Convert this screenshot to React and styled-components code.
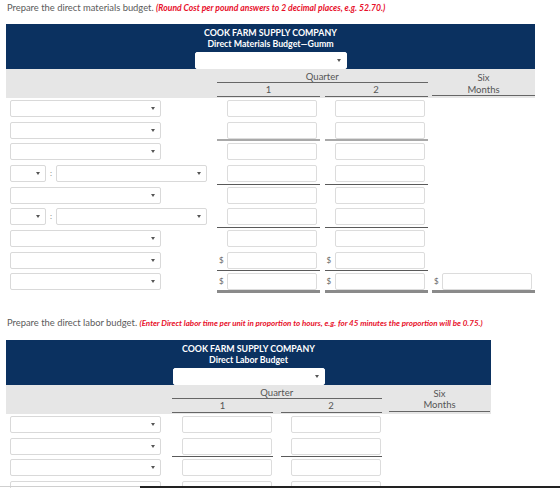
import React from 'react';
import styled, { createGlobalStyle, css } from 'styled-components';

const GlobalStyle = createGlobalStyle`
  html, body {
    margin: 0;
    padding: 0;
    background: #fff;
  }
  body {
    font-family: Lato, "Open Sans", sans-serif;
    color: #555;
    overflow: hidden;
  }
`;

const Page = styled.div`
  padding: 0 0 0 6px;
`;

const Prompt = styled.p`
  margin: ${p => p.$top}px 0 0 1px;
  font-size: 9.4px;
  line-height: 10px;
  color: #5b5b5b;
  white-space: nowrap;
`;

const Hint = styled.em`
  font-size: ${p => p.$size || 8}px;
  color: #e8102b;
  font-weight: 700;
`;

const Sheet = styled.div`
  width: ${p => p.$width}px;
  margin-top: ${p => p.$top}px;
`;

const Banner = styled.div`
  height: 45px;
  box-sizing: border-box;
  padding-top: 3px;
  background: #0b3160;
  display: flex;
  flex-direction: column;
  align-items: center;
  color: #fff;
  font-weight: 700;
  font-size: 8.8px;
  line-height: 11px;
`;

const Picker = styled.div`
  position: relative;
  box-sizing: border-box;
  width: ${p => p.$w}px;
  height: 17px;
  background: #fff;
  border: 1px solid ${p => (p.$bare ? '#fff' : '#d9d9d9')};
  border-radius: 2px;
  flex: none;

  &::after {
    content: '';
    position: absolute;
    right: 5px;
    top: 6px;
    border-left: 2px solid transparent;
    border-right: 2px solid transparent;
    border-top: 3px solid #555;
  }
`;

const BannerPicker = styled(Picker)`
  margin-top: 3px;
`;

const Grid = styled.div`
  display: grid;
  grid-template-columns: ${p => p.$cols};
  column-gap: ${p => p.$gap}px;
`;

const HeadBand = styled(Grid)`
  background: #e6e6e6;
  height: 29px;
  grid-template-rows: 14px 15px;
  font-size: 9.5px;
  text-align: center;
  color: #555;
`;

const HeadCell = styled.div`
  box-sizing: border-box;
  border-bottom: 1px solid #666;
  ${p =>
    p.$top
      ? css`
          grid-column: 2 / span 2;
          grid-row: 1;
          padding-top: 2px;
          line-height: 11px;
        `
      : css`
          grid-column: ${p.$col};
          grid-row: 2;
          height: 14px;
          line-height: 13px;
        `}
`;

const SpanCell = styled.div`
  grid-column: 4;
  grid-row: 1 / span 2;
  box-sizing: border-box;
  height: 27px;
  padding-top: 3px;
  line-height: 11.5px;
  border-bottom: 1px solid #666;
`;

const Row = styled(Grid)`
  height: 21.67px;
`;

const rules = {
  thin: '1px solid #5a5a5a',
  thick: '2px solid #a9a9a9',
  total: '3px solid #8a8a8a',
};

const LabelCell = styled.div`
  display: flex;
  align-items: flex-start;
  padding: 2px 0 0 4px;
`;

const Colon = styled.span`
  width: 10px;
  padding-left: 4px;
  box-sizing: border-box;
  font-size: 8px;
  line-height: 17px;
  color: #888;
`;

const AmountCell = styled.div`
  box-sizing: border-box;
  display: flex;
  align-items: flex-start;
  padding-top: 2px;
  border-bottom: ${p => (p.$rule ? rules[p.$rule] : 'none')};
`;

const Sign = styled.span`
  width: 10px;
  flex: none;
  box-sizing: border-box;
  padding-left: 2px;
  font-size: 8px;
  line-height: 17px;
  color: #666;
`;

const Field = styled.input`
  box-sizing: border-box;
  width: 90px;
  height: 17px;
  margin: 0;
  padding: 0 3px;
  border: 1px solid #dcdcdc;
  border-radius: 2px;
  background: #fff;
  font: inherit;
  outline: none;
`;

const BottomStrip = styled.div`
  position: fixed;
  left: 0;
  right: 0;
  bottom: 0;
  height: 3px;
  display: flex;
  align-items: flex-end;
`;

const StripLight = styled.div`
  width: 140px;
  height: 2px;
  border-top: 1px solid #cfcfcf;
  box-sizing: border-box;
`;

const StripDark = styled.div`
  flex: 1;
  height: 2px;
  background: #222;
`;

const materialRows = [
  { amounts: 2 },
  { amounts: 2, rule: 'thick' },
  { amounts: 2 },
  { amounts: 2, pair: true, rule: 'thin' },
  { amounts: 2 },
  { amounts: 2, pair: true, rule: 'thin' },
  { amounts: 2 },
  { amounts: 2, dollar: true, rule: 'thin' },
  { amounts: 3, dollar: true, rule: 'total' },
];

const laborRows = [
  { amounts: 2 },
  { amounts: 2, rule: 'thin' },
  { amounts: 2 },
  { amounts: 2 },
];

const BudgetTable = ({ width, top, cols, gap, title, rows }) => (
  <Sheet $width={width} $top={top}>
    <Banner>
      <span>COOK FARM SUPPLY COMPANY</span>
      <span>{title}</span>
      <BannerPicker $w={152} $bare />
    </Banner>
    <HeadBand $cols={cols} $gap={gap}>
      <HeadCell $top>Quarter</HeadCell>
      <HeadCell $col={2}>1</HeadCell>
      <HeadCell $col={3}>2</HeadCell>
      <SpanCell>
        Six
        <br />
        Months
      </SpanCell>
    </HeadBand>
    {rows.map((row, i) => (
      <Row key={i} $cols={cols} $gap={gap}>
        <LabelCell>
          {row.pair ? (
            <>
              <Picker $w={36} />
              <Colon>:</Colon>
              <Picker $w={151} />
            </>
          ) : (
            <Picker $w={151} />
          )}
        </LabelCell>
        {Array.from({ length: row.amounts }).map((_, j) => (
          <AmountCell key={j} $rule={row.rule}>
            <Sign>{row.dollar ? '$' : ''}</Sign>
            <Field readOnly />
          </AmountCell>
        ))}
      </Row>
    ))}
  </Sheet>
);

export default function App() {
  return (
    <Page>
      <GlobalStyle />
      <Prompt $top={3}>
        Prepare the direct materials budget.{' '}
        <Hint $size={8.6}>(Round Cost per pound answers to 2 decimal places, e.g. 52.70.)</Hint>
      </Prompt>
      <BudgetTable
        width={529}
        top={11}
        cols="206.5px 103px 103px 103px"
        gap={4.5}
        title="Direct Materials Budget—Gumm"
        rows={materialRows}
      />
      <Prompt $top={25}>
        Prepare the direct labor budget.{' '}
        <Hint>
          (Enter Direct labor time per unit in proportion to hours, e.g. for 45 minutes the
          proportion will be 0.75.)
        </Hint>
      </Prompt>
      <BudgetTable
        width={485}
        top={12}
        cols="158.5px 101px 101px 101px"
        gap={7.5}
        title="Direct Labor Budget"
        rows={laborRows}
      />
      <BottomStrip>
        <StripLight />
        <StripDark />
      </BottomStrip>
    </Page>
  );
}
